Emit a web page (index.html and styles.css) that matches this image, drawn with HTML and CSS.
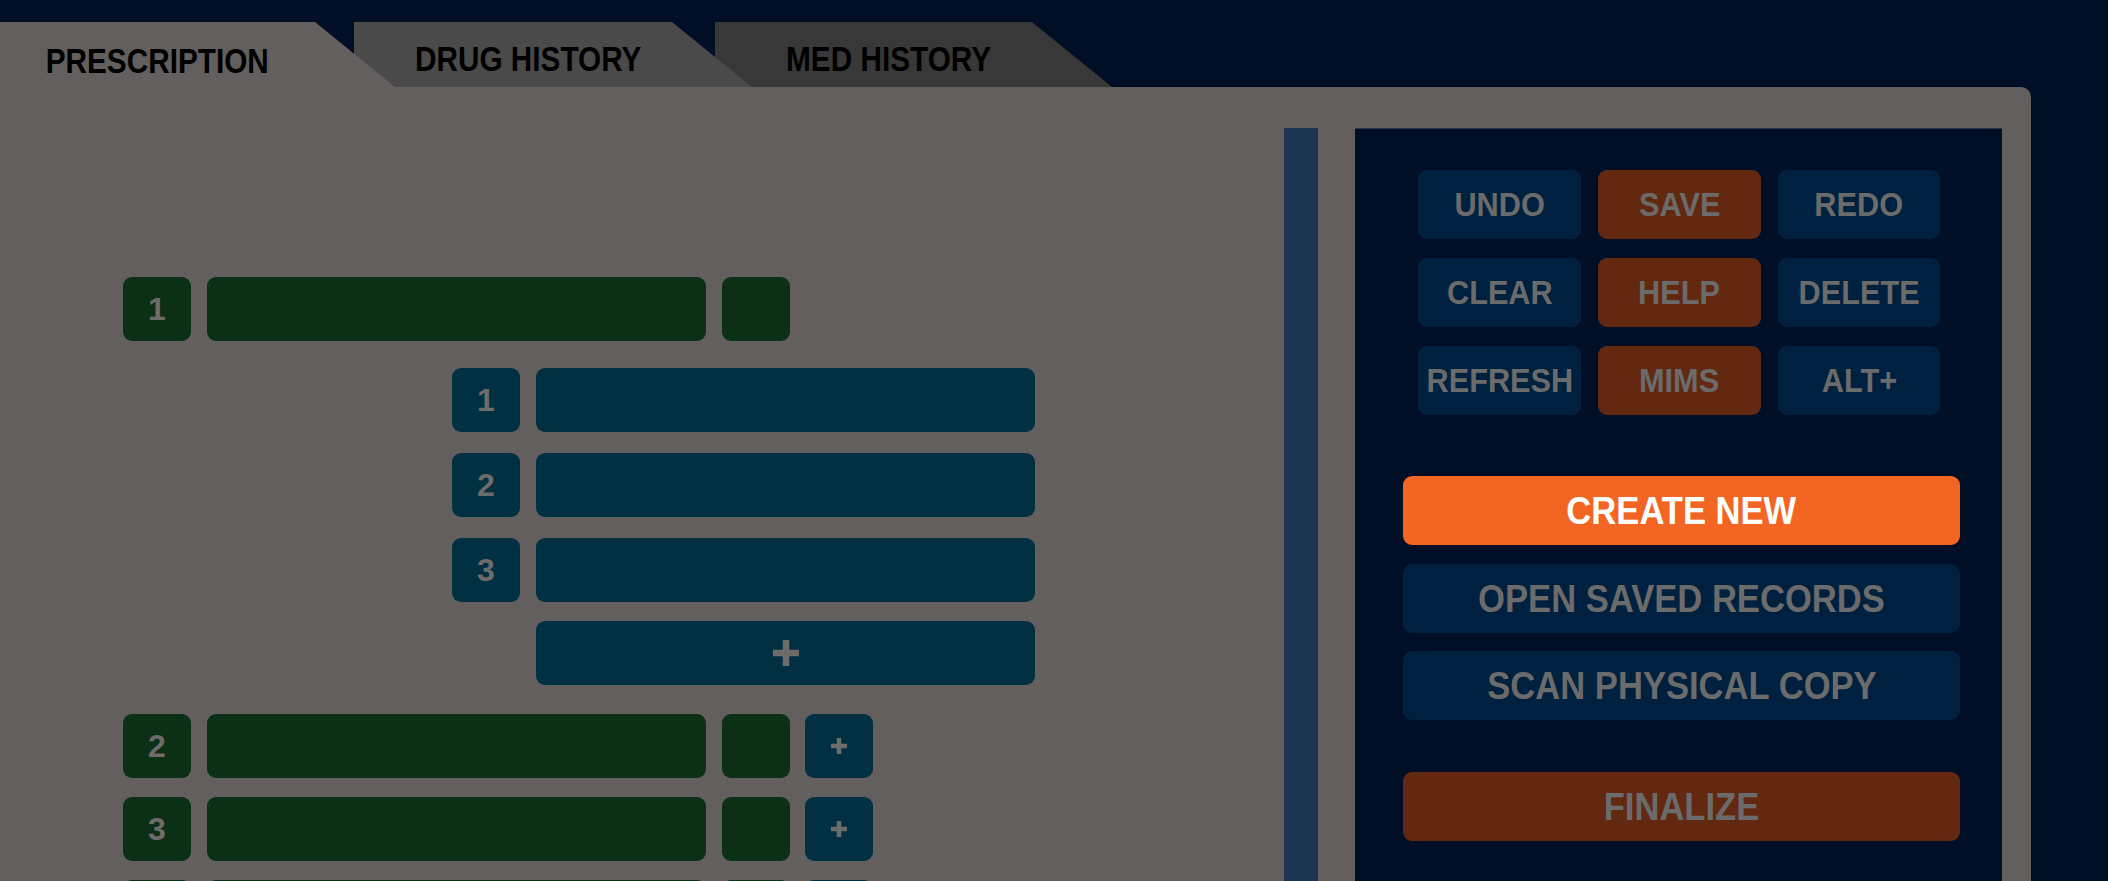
FILE: index.html
```html
<!DOCTYPE html>
<html>
<head>
<meta charset="utf-8">
<title>Prescription</title>
<link rel="stylesheet" href="styles.css">
</head>
<body>
<div class="app">
  <nav class="tabs">
    <div class="tab tab-active"><span class="label">PRESCRIPTION</span></div>
    <div class="tab tab-drug"><span class="label">DRUG HISTORY</span></div>
    <div class="tab tab-med"><span class="label">MED HISTORY</span></div>
  </nav>
  <main class="panel">
    <section class="editor">
      <div class="row green row-first">
        <div class="cell num">1</div>
        <div class="cell bar"></div>
        <div class="cell sq"></div>
      </div>
      <div class="sublist">
        <div class="row blue"><div class="cell num">1</div><div class="cell bar"></div></div>
        <div class="row blue"><div class="cell num">2</div><div class="cell bar"></div></div>
        <div class="row blue"><div class="cell num">3</div><div class="cell bar"></div></div>
        <div class="row blue row-add">
          <div class="cell bar plus-bar">
            <svg width="26" height="26" viewBox="0 0 26 26"><path d="M13 0V26M0 13H26" stroke="#6e6c6b" stroke-width="6.5" fill="none"/></svg>
          </div>
        </div>
      </div>
      <div class="group">
        <div class="row green">
          <div class="cell num">2</div><div class="cell bar"></div><div class="cell sq"></div>
          <div class="cell add-sq"><svg width="16" height="16" viewBox="0 0 16 16"><path d="M8 0V16M0 8H16" stroke="#6e6c6b" stroke-width="4.5" fill="none"/></svg></div>
        </div>
        <div class="row green">
          <div class="cell num">3</div><div class="cell bar"></div><div class="cell sq"></div>
          <div class="cell add-sq"><svg width="16" height="16" viewBox="0 0 16 16"><path d="M8 0V16M0 8H16" stroke="#6e6c6b" stroke-width="4.5" fill="none"/></svg></div>
        </div>
        <div class="row green">
          <div class="cell num"></div><div class="cell bar"></div><div class="cell sq"></div>
          <div class="cell add-sq"></div>
        </div>
      </div>
    </section>
    <div class="divider"></div>
    <aside class="sidebar">
      <div class="grid">
        <div class="btn btn-blue"><span class="label">UNDO</span></div>
        <div class="btn btn-rust"><span class="label">SAVE</span></div>
        <div class="btn btn-blue"><span class="label">REDO</span></div>
        <div class="btn btn-blue"><span class="label">CLEAR</span></div>
        <div class="btn btn-rust"><span class="label">HELP</span></div>
        <div class="btn btn-blue"><span class="label">DELETE</span></div>
        <div class="btn btn-blue"><span class="label">REFRESH</span></div>
        <div class="btn btn-rust"><span class="label">MIMS</span></div>
        <div class="btn btn-blue"><span class="label">ALT+</span></div>
      </div>
      <div class="actions">
        <div class="btn wide btn-create"><span class="label">CREATE NEW</span></div>
        <div class="btn wide btn-blue btn-open"><span class="label">OPEN SAVED RECORDS</span></div>
        <div class="btn wide btn-blue btn-scan"><span class="label">SCAN PHYSICAL COPY</span></div>
        <div class="btn wide btn-rust btn-final"><span class="label">FINALIZE</span></div>
      </div>
    </aside>
  </main>
</div>
</body>
</html>
```
FILE: styles.css
```css
html, body {
  margin: 0;
  padding: 0;
}
body {
  background: #000f26;
  height: 881px;
  overflow: hidden;
  font-family: "Liberation Sans", Arial, sans-serif;
  font-weight: bold;
}
.label {
  display: inline-block;
  white-space: nowrap;
}
.app {
  padding-top: 22px;
  height: 881px;
  box-sizing: border-box;
  overflow: hidden;
}
.tabs {
  display: flex;
  height: 65px;
}
.tab {
  position: relative;
  height: 65px;
  box-sizing: border-box;
  clip-path: polygon(0 0, calc(100% - 80px) 0, 100% 100%, 0 100%);
  display: flex;
  justify-content: center;
  align-items: flex-start;
  padding-right: 80px;
  font-size: 35px;
  line-height: 35px;
  color: #000;
}
.tab .label {
  transform: scaleX(0.85);
}
.tab-active {
  width: 395px;
  background: #625f5e;
  z-index: 3;
  padding-top: 21px;
}
.tab-drug {
  width: 398px;
  margin-left: -41px;
  background: #4a4a4a;
  z-index: 2;
  padding-left: 30px;
  padding-top: 19px;
}
.tab-med {
  width: 397px;
  margin-left: -37px;
  background: #383838;
  z-index: 1;
  padding-left: 30px;
  padding-top: 19px;
}
.panel {
  width: 2031px;
  height: 794px;
  box-sizing: border-box;
  background: #625f5e;
  border-top-right-radius: 10px;
  padding-top: 41px;
  display: flex;
  overflow: hidden;
}
.editor {
  width: 1284px;
  box-sizing: border-box;
  padding-left: 123px;
  padding-top: 149px;
}
.row {
  display: flex;
  gap: 16px;
  height: 64px;
  flex: none;
}
.cell {
  border-radius: 9px;
  box-sizing: border-box;
}
.green .cell {
  background: #0b3016;
}
.blue .cell,
.green .add-sq {
  background: #003042;
}
.num {
  width: 68px;
  display: flex;
  align-items: center;
  justify-content: center;
  font-size: 32px;
  line-height: 32px;
  color: #6e6c6b;
}
.bar {
  width: 499px;
}
.sq {
  width: 68px;
}
.add-sq {
  width: 68px;
  margin-left: -1px;
  display: flex;
  align-items: center;
  justify-content: center;
}
.sublist {
  margin-left: 329px;
  margin-top: 27px;
  display: flex;
  flex-direction: column;
  gap: 21px;
}
.row-add {
  margin-left: 84px;
  margin-top: -2px;
}
.plus-bar {
  display: flex;
  align-items: center;
  justify-content: center;
}
.group {
  margin-top: 29px;
  display: flex;
  flex-direction: column;
  gap: 19px;
}
.divider {
  width: 34px;
  background: #1c3550;
  margin-right: 37px;
}
.sidebar {
  width: 647px;
  box-sizing: border-box;
  background: #000f26;
  border-top: 1px solid #2e3648;
  padding-top: 41px;
}
.grid {
  display: grid;
  grid-template-columns: 163px 163px 162px;
  grid-auto-rows: 69px;
  column-gap: 17px;
  row-gap: 19px;
  margin-left: 63px;
}
.btn {
  border-radius: 9px;
  display: flex;
  align-items: center;
  justify-content: center;
  color: #6b6b6b;
  font-size: 33px;
  line-height: 33px;
}
.btn .label {
  transform: scaleX(0.93);
}
.btn-blue {
  background: #00203f;
}
.btn-rust {
  background: #632910;
}
.actions {
  margin-left: 48px;
  width: 557px;
  margin-top: 61px;
  display: flex;
  flex-direction: column;
}
.wide {
  height: 69px;
  font-size: 38px;
  line-height: 38px;
}
.wide .label {
  transform: scaleX(0.91);
}
.btn-create {
  background: #f26522;
  color: #fff;
}
.btn-open {
  margin-top: 19px;
}
.btn-scan {
  margin-top: 18px;
}
.btn-final {
  margin-top: 52px;
}
```
